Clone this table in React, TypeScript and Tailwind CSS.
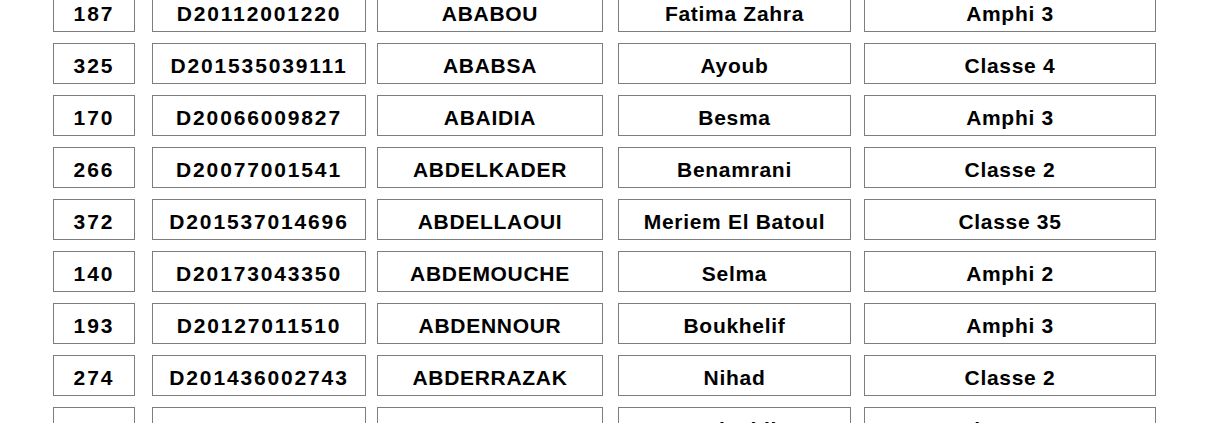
type Row = {
  num: string;
  matricule: string;
  nom: string;
  prenom: string;
  salle: string;
};

const rows: Row[] = [
  { num: "187", matricule: "D20112001220", nom: "ABABOU", prenom: "Fatima Zahra", salle: "Amphi 3" },
  { num: "325", matricule: "D201535039111", nom: "ABABSA", prenom: "Ayoub", salle: "Classe 4" },
  { num: "170", matricule: "D20066009827", nom: "ABAIDIA", prenom: "Besma", salle: "Amphi 3" },
  { num: "266", matricule: "D20077001541", nom: "ABDELKADER", prenom: "Benamrani", salle: "Classe 2" },
  { num: "372", matricule: "D201537014696", nom: "ABDELLAOUI", prenom: "Meriem El Batoul", salle: "Classe 35" },
  { num: "140", matricule: "D20173043350", nom: "ABDEMOUCHE", prenom: "Selma", salle: "Amphi 2" },
  { num: "193", matricule: "D20127011510", nom: "ABDENNOUR", prenom: "Boukhelif", salle: "Amphi 3" },
  { num: "274", matricule: "D201436002743", nom: "ABDERRAZAK", prenom: "Nihad", salle: "Classe 2" },
  { num: "362", matricule: "D20165060038", nom: "ABDESSELAM", prenom: "Salsabil", salle: "Classe 35" },
];

const cell =
  "flex h-[41px] shrink-0 items-center justify-center border border-[#7d7d7d] bg-white pt-[4px] text-[21px] font-bold leading-none text-black";

export default function App() {
  return (
    <div className="h-[423px] w-[1210px] overflow-hidden bg-white font-['Liberation_Sans',Arial,sans-serif]">
      <div className="-mt-[9px] flex flex-col gap-[11px] pl-[53px]">
        {rows.map((r) => (
          <div key={r.matricule} className="flex">
            <div className={`${cell} w-[82px] tracking-[2px]`}>{r.num}</div>
            <div className={`${cell} ml-[17px] w-[214px] tracking-[1.85px]`}>{r.matricule}</div>
            <div className={`${cell} ml-[11px] w-[226px] tracking-[0.7px]`}>{r.nom}</div>
            <div className={`${cell} ml-[15px] w-[233px] tracking-[0.7px]`}>{r.prenom}</div>
            <div className={`${cell} ml-[13px] w-[292px] tracking-[0.7px]`}>{r.salle}</div>
          </div>
        ))}
      </div>
    </div>
  );
}
